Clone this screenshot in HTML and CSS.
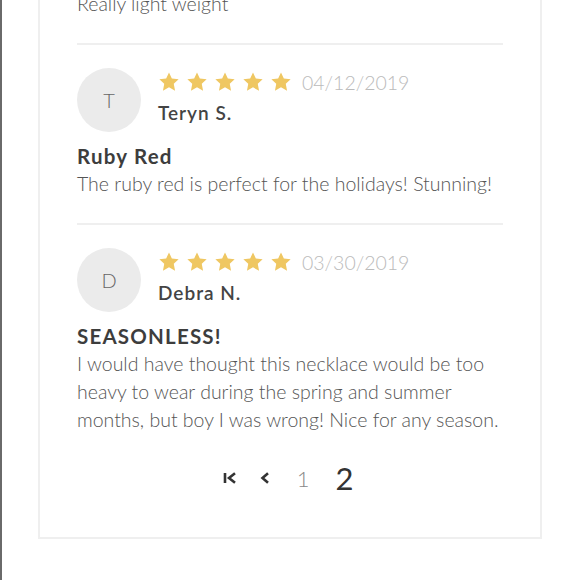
FILE: index.html
```html
<!DOCTYPE html>
<html>
<head>
<meta charset="utf-8">
<link rel="stylesheet" href="styles.css">
</head>
<body>
<div class="page">
  <div class="card">
    <p class="body prev">Really light weight</p>
    <hr class="divider">
    <div class="review">
      <div class="head">
        <div class="avatar">T</div>
        <div class="meta">
          <div class="rating">
            <span class="stars">
              <svg viewBox="0 0 24 24"><polygon points="12,1.5 15.1,8.1 22.5,9 17.2,14 18.6,21.5 12,17.8 5.4,21.5 6.8,14 1.5,9 8.9,8.1"/></svg>
              <svg viewBox="0 0 24 24"><polygon points="12,1.5 15.1,8.1 22.5,9 17.2,14 18.6,21.5 12,17.8 5.4,21.5 6.8,14 1.5,9 8.9,8.1"/></svg>
              <svg viewBox="0 0 24 24"><polygon points="12,1.5 15.1,8.1 22.5,9 17.2,14 18.6,21.5 12,17.8 5.4,21.5 6.8,14 1.5,9 8.9,8.1"/></svg>
              <svg viewBox="0 0 24 24"><polygon points="12,1.5 15.1,8.1 22.5,9 17.2,14 18.6,21.5 12,17.8 5.4,21.5 6.8,14 1.5,9 8.9,8.1"/></svg>
              <svg viewBox="0 0 24 24"><polygon points="12,1.5 15.1,8.1 22.5,9 17.2,14 18.6,21.5 12,17.8 5.4,21.5 6.8,14 1.5,9 8.9,8.1"/></svg>
            </span>
            <span class="date">04/12/2019</span>
          </div>
          <div class="name">Teryn S.</div>
        </div>
      </div>
      <h3 class="title">Ruby Red</h3>
      <p class="body">The ruby red is perfect for the holidays! Stunning!</p>
    </div>
    <hr class="divider">
    <div class="review">
      <div class="head">
        <div class="avatar">D</div>
        <div class="meta">
          <div class="rating">
            <span class="stars">
              <svg viewBox="0 0 24 24"><polygon points="12,1.5 15.1,8.1 22.5,9 17.2,14 18.6,21.5 12,17.8 5.4,21.5 6.8,14 1.5,9 8.9,8.1"/></svg>
              <svg viewBox="0 0 24 24"><polygon points="12,1.5 15.1,8.1 22.5,9 17.2,14 18.6,21.5 12,17.8 5.4,21.5 6.8,14 1.5,9 8.9,8.1"/></svg>
              <svg viewBox="0 0 24 24"><polygon points="12,1.5 15.1,8.1 22.5,9 17.2,14 18.6,21.5 12,17.8 5.4,21.5 6.8,14 1.5,9 8.9,8.1"/></svg>
              <svg viewBox="0 0 24 24"><polygon points="12,1.5 15.1,8.1 22.5,9 17.2,14 18.6,21.5 12,17.8 5.4,21.5 6.8,14 1.5,9 8.9,8.1"/></svg>
              <svg viewBox="0 0 24 24"><polygon points="12,1.5 15.1,8.1 22.5,9 17.2,14 18.6,21.5 12,17.8 5.4,21.5 6.8,14 1.5,9 8.9,8.1"/></svg>
            </span>
            <span class="date">03/30/2019</span>
          </div>
          <div class="name">Debra N.</div>
        </div>
      </div>
      <h3 class="title caps">SEASONLESS!</h3>
      <p class="body">I would have thought this necklace would be too heavy to wear during the spring and summer months, but boy I was wrong! Nice for any season.</p>
    </div>
    <nav class="pager">
      <svg class="pg-icon first" viewBox="0 0 14 12"><path d="M2 1 V11 M12 1.2 L6 6 L12 10.8" fill="none" stroke="#333" stroke-width="2.6"/></svg>
      <svg class="pg-icon prev-ic" viewBox="0 0 10 12"><path d="M8 1.2 L2.5 6 L8 10.8" fill="none" stroke="#333" stroke-width="2.6"/></svg>
      <span class="pg-num">1</span>
      <span class="pg-num current">2</span>
    </nav>
  </div>
</div>
</body>
</html>
```
FILE: styles.css
```css
html, body {
  margin: 0;
  padding: 0;
  background: #fff;
}
body {
  font-family: Lato, "Open Sans", sans-serif;
  overflow: hidden;
  height: 580px;
}
.page {
  display: flow-root;
  border-left: 2px solid #6a6a6a;
  height: 580px;
  box-sizing: border-box;
  padding-left: 36px;
}
.card {
  width: 504px;
  box-sizing: border-box;
  border: 2px solid #efefef;
  border-top: none;
  padding: 0 37px 0 37px;
  margin-top: -10px;
  height: 549px;
}
.body {
  margin: 0;
  font-size: 19.5px;
  font-weight: 300;
  line-height: 28px;
  color: #555;
}
.divider {
  border: none;
  border-top: 2px solid #efefef;
  margin: 25px 0 0 0;
}
.review {
  padding-top: 23px;
}
.head {
  display: flex;
  align-items: flex-start;
  gap: 17px;
}
.avatar {
  width: 64px;
  height: 64px;
  border-radius: 50%;
  background: #ebebeb;
  color: #666;
  font-weight: 300;
  font-size: 20px;
  display: flex;
  align-items: center;
  justify-content: center;
  flex: none;
}
.meta {
  padding-top: 2px;
}
.rating {
  display: flex;
  align-items: center;
  height: 24px;
}
.stars {
  display: flex;
  gap: 6px;
}
.stars svg {
  width: 22px;
  height: 22px;
  fill: #efc762;
}
.date {
  margin-left: 10px;
  font-size: 19.5px;
  font-weight: 300;
  color: #bbb;
}
.name {
  margin-top: 5px;
  font-size: 19px;
  font-weight: 600;
  color: #444;
  letter-spacing: 1px;
  line-height: 28px;
}
.title {
  margin: 10px 0 0 0;
  font-size: 20.5px;
  font-weight: 700;
  color: #3d3d3d;
  letter-spacing: 1.2px;
  line-height: 28px;
}
.pager {
  display: flex;
  justify-content: center;
  align-items: center;
  padding-top: 25px;
  padding-right: 4px;
}
.pg-icon {
  height: 12px;
}
.first {
  width: 14px;
  margin-right: 23px;
}
.prev-ic {
  width: 10px;
  margin-right: 27px;
}
.pg-num {
  font-size: 22px;
  font-weight: 300;
  color: #888;
  margin-right: 26px;
}
.pg-num.current {
  font-size: 31px;
  font-weight: 400;
  color: #333;
  margin-right: 0;
}
```
